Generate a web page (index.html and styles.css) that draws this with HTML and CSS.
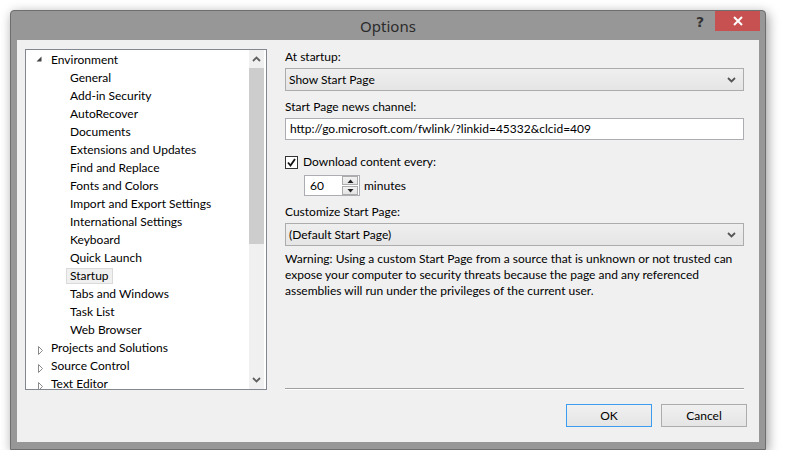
FILE: index.html
```html
<!DOCTYPE html>
<html>
<head>
<meta charset="utf-8">
<title>Options</title>
<link rel="stylesheet" href="styles.css">
</head>
<body>
<div class="window">
  <div class="titlebar">
    <span class="title">Options</span>
    <div class="tb-buttons">
      <span class="help">?</span>
      <span class="close"><svg width="12" height="10" viewBox="0 0 12 10"><path d="M2 1 L10 9 M10 1 L2 9" stroke="#fff" stroke-width="2"/></svg></span>
    </div>
  </div>
  <div class="client">
    <div class="tree">
      <div class="tree-list">
        <div class="row top"><span class="exp"><svg width="13" height="18" viewBox="0 0 13 18"><polygon points="7.5,5.5 7.5,10.5 2.5,10.5" fill="#444"/></svg></span><span class="lbl">Environment</span></div>
        <div class="row child"><span class="lbl">General</span></div>
        <div class="row child"><span class="lbl">Add-in Security</span></div>
        <div class="row child"><span class="lbl">AutoRecover</span></div>
        <div class="row child"><span class="lbl">Documents</span></div>
        <div class="row child"><span class="lbl">Extensions and Updates</span></div>
        <div class="row child"><span class="lbl">Find and Replace</span></div>
        <div class="row child"><span class="lbl">Fonts and Colors</span></div>
        <div class="row child"><span class="lbl">Import and Export Settings</span></div>
        <div class="row child"><span class="lbl">International Settings</span></div>
        <div class="row child"><span class="lbl">Keyboard</span></div>
        <div class="row child"><span class="lbl">Quick Launch</span></div>
        <div class="row child"><span class="lbl selected">Startup</span></div>
        <div class="row child"><span class="lbl">Tabs and Windows</span></div>
        <div class="row child"><span class="lbl">Task List</span></div>
        <div class="row child"><span class="lbl">Web Browser</span></div>
        <div class="row top"><span class="exp"><svg width="13" height="18" viewBox="0 0 13 18"><polygon points="4.5,7.5 8.5,11.5 4.5,15.5" fill="none" stroke="#8a8a8a"/></svg></span><span class="lbl">Projects and Solutions</span></div>
        <div class="row top"><span class="exp"><svg width="13" height="18" viewBox="0 0 13 18"><polygon points="4.5,7.5 8.5,11.5 4.5,15.5" fill="none" stroke="#8a8a8a"/></svg></span><span class="lbl">Source Control</span></div>
        <div class="row top"><span class="exp"><svg width="13" height="18" viewBox="0 0 13 18"><polygon points="4.5,7.5 8.5,11.5 4.5,15.5" fill="none" stroke="#8a8a8a"/></svg></span><span class="lbl">Text Editor</span></div>
      </div>
      <div class="scrollbar">
        <div class="sb-btn"><svg width="9" height="6" viewBox="0 0 9 6"><polyline points="1,5 4.5,1.5 8,5" fill="none" stroke="#606060" stroke-width="1.8"/></svg></div>
        <div class="sb-track"><div class="sb-thumb"></div></div>
        <div class="sb-btn"><svg width="9" height="6" viewBox="0 0 9 6"><polyline points="1,1 4.5,4.5 8,1" fill="none" stroke="#606060" stroke-width="1.8"/></svg></div>
      </div>
    </div>
    <div class="pane">
      <div class="label">At startup:</div>
      <div class="combo"><span>Show Start Page</span><svg width="9" height="6" viewBox="0 0 9 6"><polyline points="1,1 4.5,4.5 8,1" fill="none" stroke="#555" stroke-width="1.8"/></svg></div>
      <div class="label gap">Start Page news channel:</div>
      <div class="textbox">http://go.microsoft.com/fwlink/?linkid=45332&amp;clcid=409</div>
      <div class="check-row">
        <span class="checkbox"><svg width="11" height="11" viewBox="0 0 11 11"><polyline points="2,5.5 4.5,8.5 9,2" fill="none" stroke="#111" stroke-width="1.8"/></svg></span>
        <span>Download content every:</span>
      </div>
      <div class="spin-row">
        <div class="spinner">
          <span class="spin-val">60</span>
          <div class="spin-btns">
            <span class="spin-btn"><svg width="7" height="4" viewBox="0 0 7 4"><polygon points="0.5,4 3.5,0.5 6.5,4" fill="#222"/></svg></span>
            <span class="spin-btn"><svg width="7" height="4" viewBox="0 0 7 4"><polygon points="0.5,0 3.5,3.5 6.5,0" fill="#222"/></svg></span>
          </div>
        </div>
        <span class="spin-lbl">minutes</span>
      </div>
      <div class="label gap">Customize Start Page:</div>
      <div class="combo"><span>(Default Start Page)</span><svg width="9" height="6" viewBox="0 0 9 6"><polyline points="1,1 4.5,4.5 8,1" fill="none" stroke="#555" stroke-width="1.8"/></svg></div>
      <p class="warning">Warning: Using a custom Start Page from a source that is unknown or not trusted can expose your computer to security threats because the page and any referenced assemblies will run under the privileges of the current user.</p>
      <div class="spacer"></div>
      <div class="separator"></div>
      <div class="buttons">
        <button class="btn default">OK</button>
        <button class="btn">Cancel</button>
      </div>
    </div>
  </div>
</div>
</body>
</html>
```
FILE: styles.css
```css
html, body {
  margin: 0;
  padding: 0;
  background: #ffffff;
}
body {
  padding: 10px 0 0 10px;
  font-family: "Lato", "Noto Sans", sans-serif;
  font-size: 12px;
  color: #000;
}
.window {
  width: 754px;
  height: 438px;
  border: 1px solid #6e6e6e;
  border-radius: 4px 4px 0 0;
  background: #979797;
  box-shadow: 2px 3px 12px rgba(0, 0, 0, 0.4);
  display: flex;
  flex-direction: column;
}
.titlebar {
  height: 29px;
  position: relative;
  display: flex;
  justify-content: center;
  align-items: center;
}
.title {
  font-family: "Noto Sans", sans-serif;
  font-size: 15px;
  color: #2b2b2b;
}
.tb-buttons {
  position: absolute;
  right: 5px;
  top: 0;
  display: flex;
  align-items: flex-start;
}
.help {
  font-family: "DejaVu Sans", sans-serif;
  font-weight: bold;
  font-size: 14px;
  color: #333;
  margin: 3px 11px 0 0;
}
.close {
  width: 45px;
  height: 20px;
  background: #c75050;
  display: flex;
  align-items: center;
  justify-content: center;
}
.client {
  flex: 1;
  margin: 0 6px 7px 6px;
  background: #f0f0f0;
  display: flex;
  padding: 8px 12px 15px 8px;
}
.tree {
  margin-top: 1px;
  width: 240px;
  height: 339px;
  border: 1px solid #828790;
  background: #fff;
  display: flex;
  overflow: hidden;
}
.tree-list {
  flex: 1;
  overflow: hidden;
  padding-top: 1px;
}
.row {
  height: 18px;
  line-height: 18px;
  display: flex;
  align-items: center;
  white-space: nowrap;
}
.row.top {
  padding-left: 8px;
}
.row.child {
  padding-left: 40px;
}
.exp {
  width: 13px;
  height: 18px;
  display: flex;
}
.lbl {
  padding: 0 3px;
  border: 1px solid transparent;
  line-height: 14px;
}
.lbl.selected {
  background: #f0f0f0;
  border-color: #dadada;
}
.scrollbar {
  width: 15px;
  margin-right: 2px;
  background: #f0f0f0;
  display: flex;
  flex-direction: column;
}
.sb-btn {
  height: 18px;
  display: flex;
  align-items: center;
  justify-content: center;
}
.sb-track {
  flex: 1;
}
.sb-thumb {
  height: 176px;
  background: #cdcdcd;
}
.pane {
  margin-left: 18px;
  width: 462px;
  display: flex;
  flex-direction: column;
}
.pane > .label,
.pane > .combo,
.pane > .textbox,
.pane > .warning,
.pane > .separator {
  margin-right: 3px;
}
.label {
  line-height: 16px;
  margin-top: 1px;
  margin-bottom: 3px;
}
.label.gap {
  margin-top: 8px;
  margin-bottom: 3px;
}
.combo {
  height: 21px;
  border: 1px solid #acacac;
  background: linear-gradient(#efefef, #e5e5e5);
  display: flex;
  align-items: center;
  justify-content: space-between;
  padding: 0 7px 0 3px;
}
.textbox {
  height: 20px;
  line-height: 20px;
  border: 1px solid #abadb3;
  background: #fff;
  padding: 0 4px;
}
.check-row {
  margin-top: 14px;
  display: flex;
  align-items: center;
  height: 16px;
  line-height: 16px;
}
.checkbox {
  width: 11px;
  height: 11px;
  border: 1px solid #333;
  background: #fff;
  margin-right: 5px;
  display: flex;
}
.spin-row {
  margin-top: 5px;
  margin-left: 19px;
  display: flex;
  align-items: center;
  gap: 4px;
}
.spin-lbl {
  margin-top: -1px;
}
.spinner {
  width: 54px;
  height: 19px;
  border: 1px solid #abadb3;
  background: #fff;
  display: flex;
  align-items: center;
}
.spin-val {
  flex: 1;
  padding-left: 5px;
}
.spin-btns {
  display: flex;
  flex-direction: column;
  gap: 1px;
  margin-right: 1px;
}
.spin-btn {
  width: 14px;
  height: 7px;
  border: 1px solid #acacac;
  background: linear-gradient(#f2f2f2, #e4e4e4);
  display: flex;
  align-items: center;
  justify-content: center;
}
.warning {
  margin: 5px 0 0 0;
  line-height: 16px;
}
.spacer {
  flex: 1;
}
.separator {
  height: 0;
  border-top: 1px solid #a0a0a0;
  border-bottom: 1px solid #ffffff;
  margin-bottom: 14px;
}
.buttons {
  display: flex;
  justify-content: flex-end;
  gap: 9px;
}
.btn {
  width: 86px;
  height: 23px;
  border: 1px solid #acacac;
  background: linear-gradient(#f0f0f0, #e5e5e5);
  font-family: inherit;
  font-size: 12px;
  color: #000;
  padding: 0;
}
.btn.default {
  border-color: #3c9cf0;
}
```
